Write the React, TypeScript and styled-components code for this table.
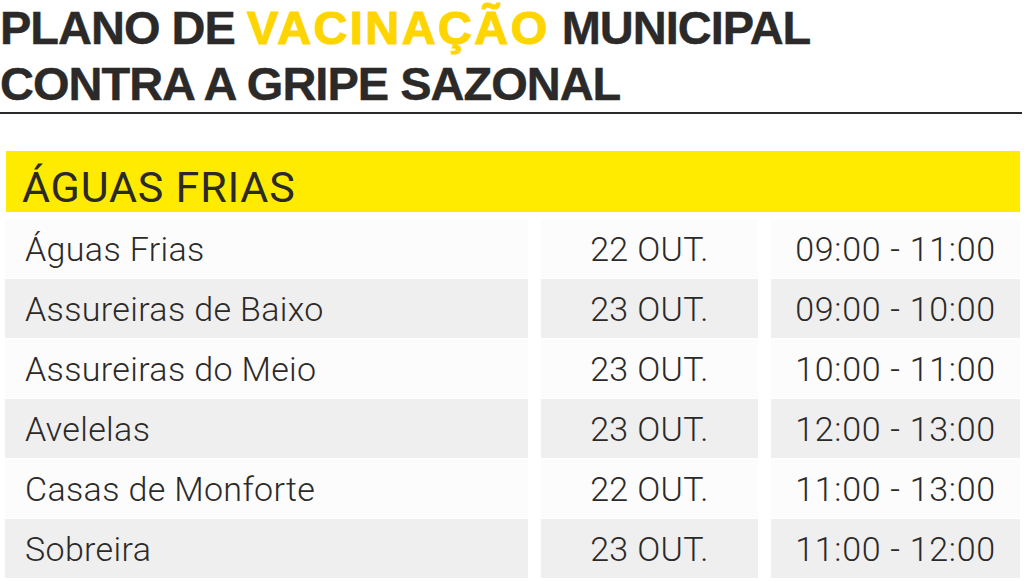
import React from "react"
import styled, { createGlobalStyle } from "styled-components"

interface Stop {
  place: string
  date: string
  hours: string
}

const stops: Stop[] = [
  { place: "Águas Frias", date: "22 OUT.", hours: "09:00 - 11:00" },
  { place: "Assureiras de Baixo", date: "23 OUT.", hours: "09:00 - 10:00" },
  { place: "Assureiras do Meio", date: "23 OUT.", hours: "10:00 - 11:00" },
  { place: "Avelelas", date: "23 OUT.", hours: "12:00 - 13:00" },
  { place: "Casas de Monforte", date: "22 OUT.", hours: "11:00 - 13:00" },
  { place: "Sobreira", date: "23 OUT.", hours: "11:00 - 12:00" },
]

const App: React.FC = () => {
  return (
    <>
      <GlobalStyle />
      <Page>
        <Title>
          PLANO DE <Highlight>VACINAÇÃO</Highlight> MUNICIPAL
          <br />
          CONTRA A GRIPE SAZONAL
        </Title>
        <Section>
          <SectionHeader>ÁGUAS FRIAS</SectionHeader>
          <Table>
            {stops.map((stop, i) => (
              <Row key={stop.place}>
                <Cell $shade={i % 2 === 1} $align="left">{stop.place}</Cell>
                <Cell $shade={i % 2 === 1} $align="center">{stop.date}</Cell>
                <Cell $shade={i % 2 === 1} $align="center" $wide>{stop.hours}</Cell>
              </Row>
            ))}
          </Table>
        </Section>
      </Page>
    </>
  )
}

export default App

const GlobalStyle = createGlobalStyle`
  html, body {
    margin: 0;
    padding: 0;
    background: #ffffff;
  }
  body {
    font-family: "Liberation Sans", Arial, sans-serif;
    color: #2b2a29;
  }
`

const Page = styled.div`
  width: 1024px;
  height: 581px;
  overflow: hidden;
  background: #ffffff;
`

const Title = styled.h1`
  margin: 0 2px 0 0;
  padding: 0;
  font-family: "Liberation Sans", Arial, sans-serif;
  font-weight: 700;
  font-size: 47px;
  line-height: 56px;
  letter-spacing: -1px;
  color: #2b2a29;
  height: 112px;
  border-bottom: 2px solid #2b2a29;
  -webkit-text-stroke: 0.4px currentColor;
`

const Highlight = styled.span`
  color: #ffd500;
  letter-spacing: 2.4px;
  -webkit-text-stroke: 1.1px currentColor;
`

const Section = styled.section`
  padding: 37px 4px 0 5px;
`

const SectionHeader = styled.h2`
  margin: 0 0 0 1px;
  height: 61px;
  box-sizing: border-box;
  padding: 12px 0 0 16px;
  background: #ffeb00;
  font-family: Roboto, "Liberation Sans", sans-serif;
  font-weight: 400;
  font-size: 43px;
  line-height: 48px;
  letter-spacing: 0.8px;
  color: #2b2a29;
`

const Table = styled.div`
  display: flex;
  flex-direction: column;
  gap: 1px;
  margin-top: 7px;
`

const Row = styled.div`
  display: grid;
  grid-template-columns: 523px 217px 249px;
  column-gap: 13px;
  height: 59px;
`

const Cell = styled.div<{ $shade: boolean; $align: "left" | "center"; $wide?: boolean }>`
  display: flex;
  align-items: center;
  justify-content: ${(p) => (p.$align === "left" ? "flex-start" : "center")};
  padding-left: ${(p) => (p.$align === "left" ? "20px" : "0")};
  background: ${(p) => (p.$shade ? "#efefef" : "#fcfcfc")};
  font-family: Roboto, "Liberation Sans", sans-serif;
  font-weight: 300;
  font-size: 34px;
  letter-spacing: ${(p) => (p.$wide ? "0.7px" : "0.35px")};
  color: #2b2a29;
  white-space: nowrap;
`
